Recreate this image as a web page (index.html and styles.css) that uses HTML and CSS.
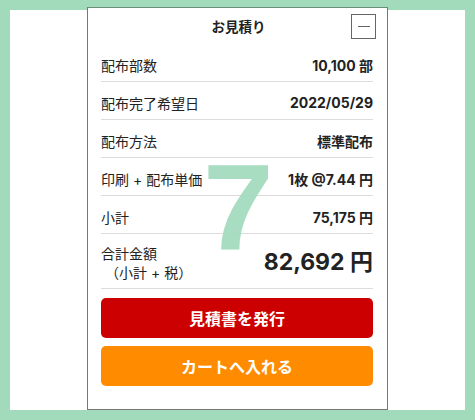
FILE: index.html
```html
<!DOCTYPE html>
<html lang="ja">
<head>
  <meta charset="UTF-8" />
  <meta name="viewport" content="width=device-width, initial-scale=1.0"/>
  <title>お見積り</title>
  <link rel="stylesheet" href="styles.css">
</head>
<body>
  <div class="frame">
    <div class="estimate">
      <div class="estimate-head">
        <span></span>
        <h2 class="estimate-title">お見積り</h2>
        <button class="minimize" aria-label="最小化"><span class="minimize-bar"></span></button>
      </div>

      <div class="row">
        <span class="row-label">配布部数</span>
        <span class="row-value">10,100 部</span>
      </div>
      <div class="row">
        <span class="row-label">配布完了希望日</span>
        <span class="row-value">2022/05/29</span>
      </div>
      <div class="row">
        <span class="row-label">配布方法</span>
        <span class="row-value">標準配布</span>
      </div>
      <div class="row">
        <span class="row-label">印刷 + 配布単価</span>
        <span class="row-value">1枚 @7.44 円</span>
      </div>
      <div class="row">
        <span class="row-label">小計</span>
        <span class="row-value">75,175 円</span>
      </div>
      <div class="row row-total">
        <span class="row-label">合計金額<br><span class="tax-note">（小計 + 税）</span></span>
        <span class="total-value">82,692 円</span>
      </div>

      <div class="actions">
        <button class="btn btn-red">見積書を発行</button>
        <button class="btn btn-orange">カートへ入れる</button>
      </div>

      <div class="step-mark">7</div>
    </div>
  </div>
</body>
</html>
```

FILE: styles.css
```css
:root {
  --green: #a1dbbc;
  --text-color: #222;
  --line: #dcdcdc;
  --panel-border: #777;
}

* {
  box-sizing: border-box;
}

body {
  margin: 0;
  background: var(--green);
  font-family: Inter, 'Noto Sans CJK JP', sans-serif;
  color: var(--text-color);
}

.frame {
  margin: 10px;
  height: 400px;
  background: #fff;
  display: flex;
  justify-content: center;
}

.estimate {
  position: relative;
  width: 301px;
  margin-top: -3px;
  height: 403px;
  border: 1px solid var(--panel-border);
  border-top-color: #6a8f7c;
  background: #fff;
  padding: 0 14px 0 13px;
}

.estimate-head {
  display: grid;
  grid-template-columns: 1fr auto 1fr;
  align-items: center;
  height: 36px;
  margin-right: -3px;
}

.estimate-title {
  margin: 0;
  font-size: 13.5px;
  font-weight: bold;
}

.minimize {
  justify-self: end;
  width: 25px;
  height: 25px;
  padding: 0;
  border: 1px solid #666;
  background: #fff;
  display: flex;
  align-items: center;
  justify-content: center;
  margin-top: 1px;
}

.minimize-bar {
  width: 12px;
  height: 1px;
  background: #666;
}

.row {
  display: flex;
  justify-content: space-between;
  align-items: center;
  height: 38px;
  padding-top: 4px;
  border-bottom: 1px solid var(--line);
  font-size: 14px;
}

.row-value {
  font-weight: bold;
}

.row-total {
  height: 55px;
  padding-top: 3px;
  line-height: 19px;
}

.tax-note {
  margin-left: 4px;
}

.total-value {
  font-size: 23px;
  font-weight: bold;
  padding-top: 0;
}

.actions {
  display: flex;
  flex-direction: column;
  gap: 8px;
  padding-top: 9px;
}

.btn {
  height: 40px;
  border: none;
  border-radius: 5px;
  color: #fff;
  font-family: inherit;
  font-size: 16px;
  font-weight: bold;
}

.btn-red {
  background: #cc0000;
}

.btn-orange {
  background: #ff8c00;
}

.step-mark {
  position: absolute;
  left: 115px;
  top: 139px;
  font-family: 'Liberation Sans', sans-serif;
  font-size: 122px;
  line-height: 1;
  font-weight: bold;
  color: var(--green);
  opacity: 0.92;
  transform: scaleX(1.04);
  transform-origin: left top;
  pointer-events: none;
}
```
